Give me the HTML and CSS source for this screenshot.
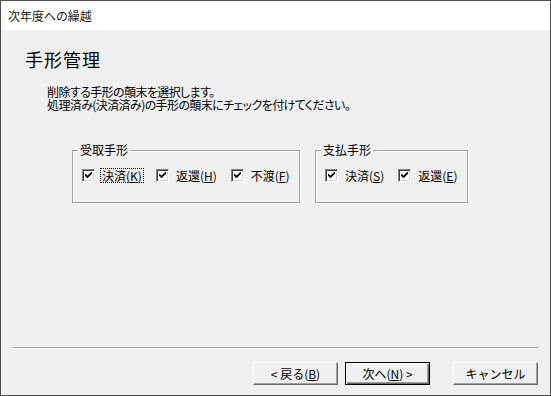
FILE: index.html
```html
<!DOCTYPE html>
<html lang="ja">

<head>
    <meta charset="UTF-8">
    <title>次年度への繰越</title>
    <link rel="stylesheet" href="styles.css">
</head>

<body>
    <div class="window">
        <div class="titlebar">次年度への繰越</div>

        <div class="body">
            <div class="page">
                <h1 class="page-title">手形管理</h1>
                <p class="page-desc">削除する手形の顛末を選択します。<br>処理済み(決済済み)の手形の顛末にチェックを付けてください。</p>

                <div class="groups">
                    <fieldset class="group group-recv">
                        <legend>受取手形</legend>
                        <div class="checks">
                            <label class="check"><span class="box"><svg viewBox="0 0 7 7"><path d="M0 2.5 L2.5 5 L7 0.5" /></svg></span><span class="text focused">決済(<u>K</u>)</span></label>
                            <label class="check"><span class="box"><svg viewBox="0 0 7 7"><path d="M0 2.5 L2.5 5 L7 0.5" /></svg></span><span class="text">返還(<u>H</u>)</span></label>
                            <label class="check"><span class="box"><svg viewBox="0 0 7 7"><path d="M0 2.5 L2.5 5 L7 0.5" /></svg></span><span class="text">不渡(<u>F</u>)</span></label>
                        </div>
                    </fieldset>

                    <fieldset class="group group-pay">
                        <legend>支払手形</legend>
                        <div class="checks">
                            <label class="check"><span class="box"><svg viewBox="0 0 7 7"><path d="M0 2.5 L2.5 5 L7 0.5" /></svg></span><span class="text">決済(<u>S</u>)</span></label>
                            <label class="check"><span class="box"><svg viewBox="0 0 7 7"><path d="M0 2.5 L2.5 5 L7 0.5" /></svg></span><span class="text">返還(<u>E</u>)</span></label>
                        </div>
                    </fieldset>
                </div>
            </div>

            <div class="footer">
                <div class="separator"></div>
                <div class="buttons">
                    <button class="btn">&lt; 戻る(<u>B</u>)</button>
                    <button class="btn btn-default">次へ(<u>N</u>) &gt;</button>
                    <button class="btn btn-cancel">キャンセル</button>
                </div>
            </div>
        </div>
    </div>
</body>

</html>
```

FILE: styles.css
```css
html, body {
    margin: 0;
    padding: 0;
    background: #f0f0f0;
    font-family: "Noto Sans CJK JP", "Noto Sans", sans-serif;
    font-feature-settings: "palt";
    color: #000;
}

.window {
    width: 551px;
    height: 396px;
    box-sizing: border-box;
    border: 1px solid #4c4c4c;
    display: flex;
    flex-direction: column;
}

.titlebar {
    height: 29px;
    line-height: 29px;
    padding-left: 7px;
    background: #fff;
    font-size: 12px;
    color: #1a1a1a;
}

.body {
    flex: 1;
    background: #f0f0f0;
    display: flex;
    flex-direction: column;
    justify-content: space-between;
}

.page {
    padding: 19px 0 0 24px;
}

.page-title {
    margin: 0;
    font-size: 18px;
    font-weight: 400;
    letter-spacing: 1px;
    line-height: 20px;
}

.page-desc {
    margin: 16px 0 0 22px;
    font-size: 12px;
    line-height: 13px;
    letter-spacing: -0.6px;
}

.groups {
    display: flex;
    gap: 15px;
    margin: 33px 0 0 47px;
}

.group {
    margin: 0;
    padding: 13px 9px 20px 9px;
    border: 1px solid #a0a0a0;
    box-shadow: 1px 1px 0 #fff, inset 1px 1px 0 #fff;
    box-sizing: border-box;
    min-width: 0;
}

.group-recv {
    width: 228px;
}

.group-pay {
    width: 153px;
}

.group legend {
    margin-left: -4px;
    padding: 0 2px;
    font-size: 12px;
    line-height: 12px;
}

.checks {
    display: flex;
    gap: 12px;
    height: 13px;
    align-items: center;
}

.check {
    display: flex;
    flex-shrink: 0;
    align-items: center;
    white-space: nowrap;
    font-size: 12px;
    line-height: 13px;
}

.box {
    width: 13px;
    height: 13px;
    box-sizing: border-box;
    border: 1px solid;
    border-color: #808080 #fff #fff #808080;
    box-shadow: inset 1px 1px 0 #404040, inset -1px -1px 0 #d8d8d8;
    background: #fff;
    display: flex;
    align-items: center;
    justify-content: center;
    margin-right: 5px;
}

.box svg {
    width: 7px;
    height: 7px;
    fill: none;
    stroke: #000;
    stroke-width: 1.8;
}

.text {
    padding: 0 1px;
    border: 1px solid transparent;
}

.text.focused {
    border: 1px dotted #000;
}

.footer {
    padding-bottom: 10px;
}

.separator {
    margin: 0 12px;
    border-top: 1px solid #a0a0a0;
    border-bottom: 1px solid #fff;
}

.buttons {
    display: flex;
    justify-content: flex-end;
    padding-right: 12px;
    margin-top: 13px;
}

.btn {
    width: 85px;
    height: 23px;
    padding: 0;
    font-family: inherit;
    font-size: 12px;
    color: #000;
    background: #f0f0f0;
    border: 1px solid;
    border-color: #fff #696969 #696969 #fff;
    box-shadow: inset -1px -1px 0 #a0a0a0;
    border-radius: 0;
}

.btn-default {
    margin-left: 7px;
    border-color: #000;
    box-shadow: inset 1px 1px 0 #fff, inset -1px -1px 0 #696969, inset -2px -2px 0 #a0a0a0;
}

.btn-cancel {
    margin-left: 23px;
}
```
